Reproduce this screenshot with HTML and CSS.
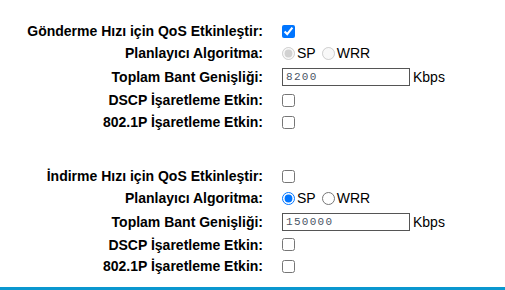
FILE: index.html
```html
<!DOCTYPE html>
<html>
<head>
<meta charset="utf-8">
<link rel="stylesheet" href="styles.css">
</head>
<body>
<div class="page">
  <div class="section">
    <div class="row h-cb"><label class="lbl">Gönderme Hızı için QoS Etkinleştir:</label><div class="ctl"><input type="checkbox" checked></div></div>
    <div class="row h-rd"><label class="lbl">Planlayıcı Algoritma:</label><div class="ctl"><input type="radio" name="a1" checked disabled><span class="opt">SP</span><input type="radio" name="a1" disabled><span class="opt">WRR</span></div></div>
    <div class="row h-in"><label class="lbl">Toplam Bant Genişliği:</label><div class="ctl"><input type="text" class="txt" value="8200"><span class="unit">Kbps</span></div></div>
    <div class="row h-cb"><label class="lbl">DSCP İşaretleme Etkin:</label><div class="ctl"><input type="checkbox"></div></div>
    <div class="row h-cb"><label class="lbl">802.1P İşaretleme Etkin:</label><div class="ctl"><input type="checkbox"></div></div>
  </div>
  <div class="section second">
    <div class="row h-cb"><label class="lbl">İndirme Hızı için QoS Etkinleştir:</label><div class="ctl"><input type="checkbox"></div></div>
    <div class="row h-rd"><label class="lbl">Planlayıcı Algoritma:</label><div class="ctl"><input type="radio" name="a2" checked><span class="opt">SP</span><input type="radio" name="a2"><span class="opt">WRR</span></div></div>
    <div class="row h-in"><label class="lbl">Toplam Bant Genişliği:</label><div class="ctl"><input type="text" class="txt" value="150000"><span class="unit">Kbps</span></div></div>
    <div class="row h-cb2"><label class="lbl">DSCP İşaretleme Etkin:</label><div class="ctl"><input type="checkbox"></div></div>
    <div class="row h-cb"><label class="lbl">802.1P İşaretleme Etkin:</label><div class="ctl"><input type="checkbox"></div></div>
  </div>
</div>
<div class="bar"></div>
</body>
</html>
```
FILE: styles.css
```css
html, body { margin: 0; padding: 0; background: #fff; }
body { width: 505px; height: 290px; overflow: hidden; position: relative; font-family: "Liberation Sans", Arial, sans-serif; color: #000; }
.page { padding-top: 20px; }
.section { display: flex; flex-direction: column; }
.second { margin-top: 32px; }
.row { display: grid; grid-template-columns: 263px 1fr; column-gap: 19px; align-items: center; }
.h-cb { height: 22px; }
.h-cb2 { height: 21px; }
.h-rd { height: 22px; }
.h-in { height: 25px; }
.lbl { text-align: right; font-weight: bold; font-size: 14px; white-space: nowrap; }
.ctl { display: flex; align-items: center; font-size: 14px; }
input[type=checkbox] { margin: 0; width: 13px; height: 13px; }
input[type=radio] { margin: 0 2px 0 0; width: 13px; height: 13px; }
.opt { margin-right: 6px; }
.txt { box-sizing: border-box; width: 128px; height: 18px; margin: 0; padding: 1px 3px; border: 1px solid #555; border-radius: 0; font-family: "Liberation Mono", monospace; font-size: 11px; letter-spacing: 1.3px; color: #4a5566; }
.unit { margin-left: 3px; }
.bar { position: absolute; left: 0; right: 0; top: 287px; height: 3px; background: #0a97cf; }
```
